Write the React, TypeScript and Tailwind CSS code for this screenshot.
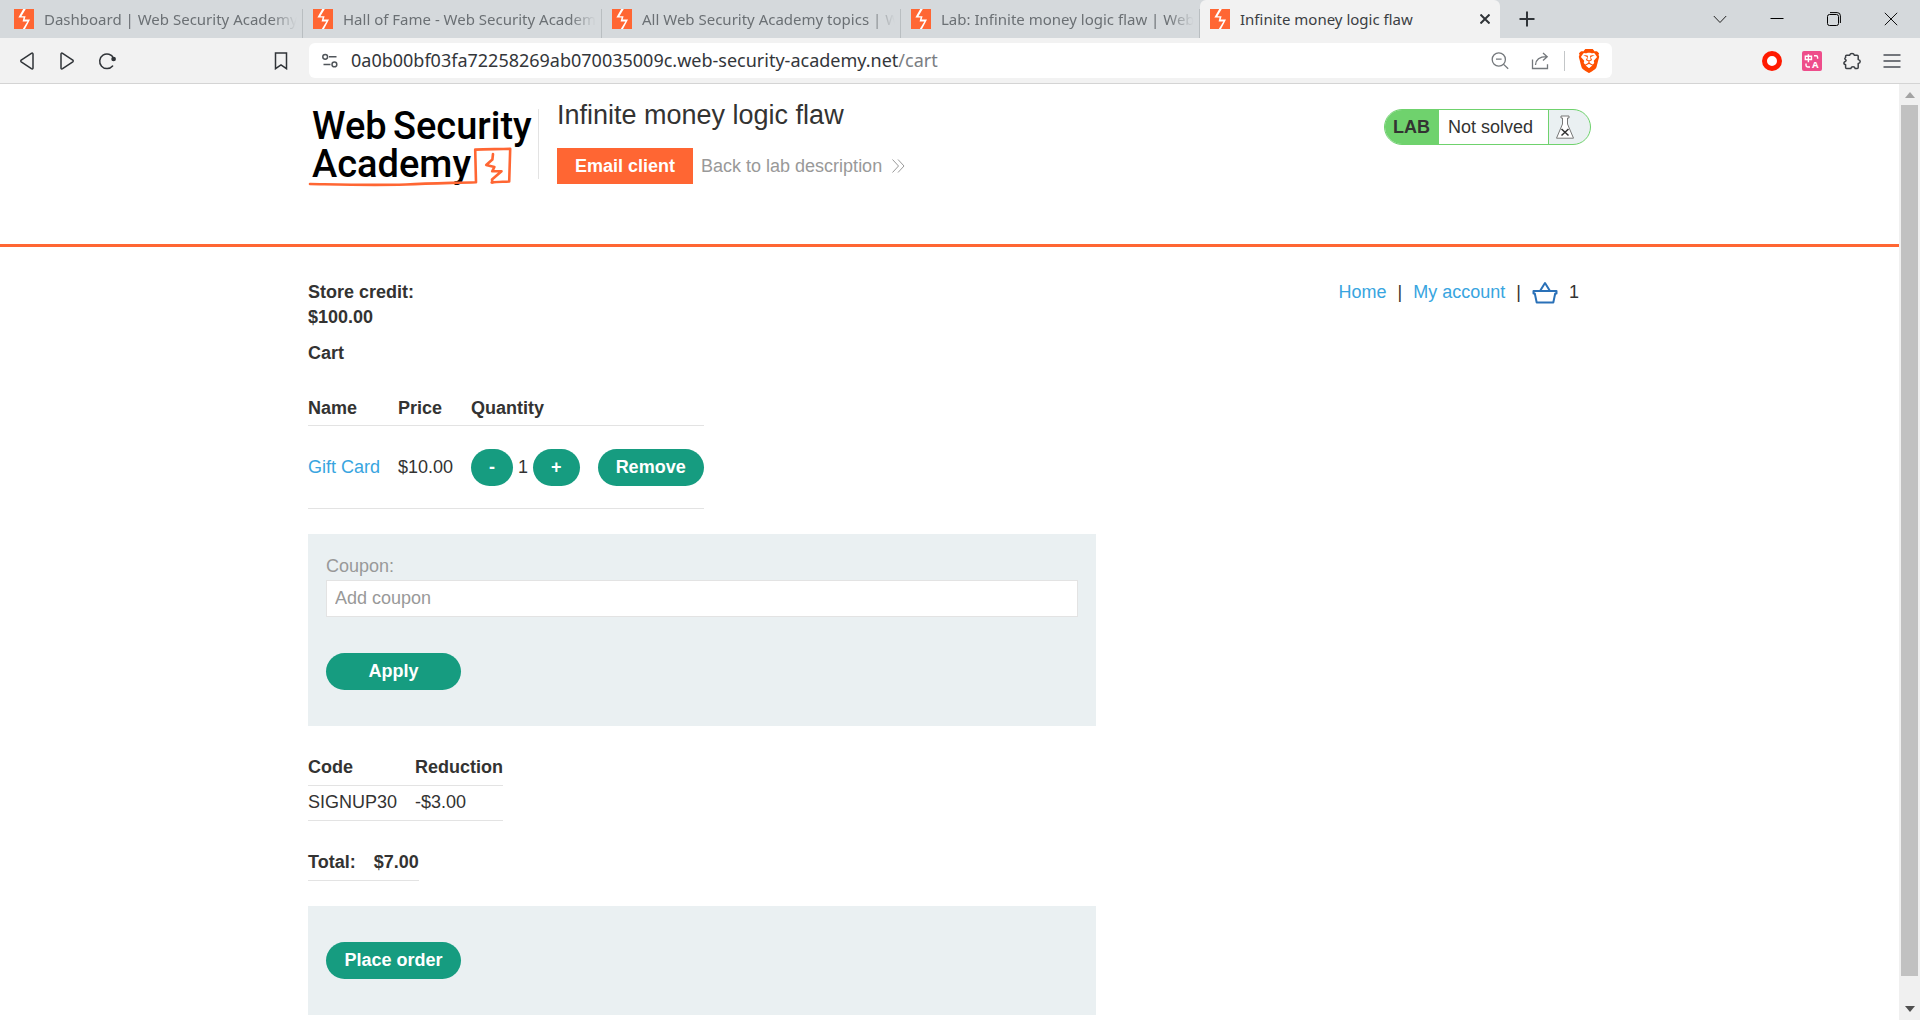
import type { ReactNode } from "react";
import { SiBrave } from "react-icons/si";

const tabs = [
    { title: "Dashboard | Web Security Academy", active: false },
    { title: "Hall of Fame - Web Security Academ", active: false },
    { title: "All Web Security Academy topics | W", active: false },
    { title: "Lab: Infinite money logic flaw | Web", active: false },
    { title: "Infinite money logic flaw", active: true },
];

const items = [{ name: "Gift Card", price: "$10.00", quantity: 1 }];

const coupons = [{ code: "SIGNUP30", reduction: "-$3.00" }];

function Favicon() {
    return (
        <svg viewBox="0 0 20 20" className="mr-[10px] size-5 shrink-0" aria-hidden="true">
            <rect width="20" height="20" fill="#ff6633" />
            <path d="M9.2 0 4.4 8.6h5.2l-1 3.8h4.8L8.8 20h2.2l5-9.4h-5.4l1-3.4H7.4L11.8 0z" fill="#fff" />
        </svg>
    );
}

function IconButton({ label, className, children }: { label: string; className: string; children: ReactNode }) {
    return (
        <button type="button" aria-label={label} className={`flex h-full shrink-0 items-center justify-center ${className}`}>
            {children}
        </button>
    );
}

function TabStrip() {
    return (
        <div className="flex h-[38px] shrink-0 bg-[#d5d9dc] pl-1">
            {tabs.map((tab) => (
                <div
                    key={tab.title}
                    className={
                        tab.active
                            ? "flex h-full w-[300px] items-center rounded-t-md bg-[#f2f2f2] px-[10px] text-[#3b3e43]"
                            : "flex h-full w-[299px] items-center pl-[10px] text-[#6b7074]"
                    }
                >
                    <Favicon />
                    <span
                        className={
                            tab.active
                                ? "min-w-0 flex-1 overflow-hidden whitespace-nowrap"
                                : "min-w-0 flex-1 overflow-hidden whitespace-nowrap [mask-image:linear-gradient(to_right,black_88%,transparent_98%)]"
                        }
                    >
                        {tab.title}
                    </span>
                    {tab.active ? (
                        <button type="button" aria-label="Close tab">
                            <svg viewBox="0 0 10 10" className="size-[10px]" stroke="#303438" strokeWidth="2">
                                <path d="m.5.5 9 9M9.5.5l-9 9" />
                            </svg>
                        </button>
                    ) : (
                        <span className="mt-[9px] h-[29px] w-px self-start bg-[#b9bec1]" />
                    )}
                </div>
            ))}
            <IconButton label="New tab" className="w-[53px]">
                <svg viewBox="0 0 16 16" className="size-4" stroke="#303438" strokeWidth="2">
                    <path d="M8 .5v15M.5 8h15" />
                </svg>
            </IconButton>
            <div className="ml-auto flex pr-px">
                <IconButton label="Search tabs" className="w-[57px]">
                    <svg viewBox="0 0 14 14" className="size-[14px]" fill="none" stroke="#222">
                        <path d="m.8 4 6.2 6.5L13.2 4" />
                    </svg>
                </IconButton>
                <IconButton label="Minimize" className="w-[57px]">
                    <svg viewBox="0 0 14 14" className="size-[14px]" stroke="#000">
                        <path d="M.5 6.5h13" />
                    </svg>
                </IconButton>
                <IconButton label="Restore" className="w-[57px]">
                    <svg viewBox="0 0 14 14" className="size-[14px]" fill="none" stroke="#000">
                        <rect x=".5" y="2.5" width="11" height="11" rx="2" />
                        <path d="M3 .6h7.2a3.2 3.2 0 0 1 3.2 3.2V11" />
                    </svg>
                </IconButton>
                <IconButton label="Close" className="w-[57px]">
                    <svg viewBox="0 0 14 14" className="size-[14px]" stroke="#111">
                        <path d="m.8.8 12.4 12.4M13.2.8.8 13.2" />
                    </svg>
                </IconButton>
            </div>
        </div>
    );
}

function Toolbar() {
    return (
        <div className="flex h-[46px] shrink-0 items-center border-b border-[#d4d4d4] bg-[#f2f2f2]">
            <div className="flex h-full w-[309px] shrink-0 items-center pr-[8px] pl-[7px]">
                <IconButton label="Back" className="w-10">
                    <svg viewBox="0 0 18 18" className="size-[18px]" fill="none" stroke="#303438" strokeWidth="1.5" strokeLinejoin="round">
                        <path d="M13.4 1.3 3.2 8.2a1 1 0 0 0 0 1.6l10.2 6.9c.8.5 1.6.1 1.6-.8V2.1c0-.9-.8-1.3-1.6-.8z" />
                    </svg>
                </IconButton>
                <IconButton label="Forward" className="w-10">
                    <svg viewBox="0 0 18 18" className="size-[18px]" fill="none" stroke="#303438" strokeWidth="1.5" strokeLinejoin="round">
                        <path d="m4.6 1.3 10.2 6.9a1 1 0 0 1 0 1.6L4.6 16.7c-.8.5-1.6.1-1.6-.8V2.1c0-.9.8-1.3 1.6-.8z" />
                    </svg>
                </IconButton>
                <IconButton label="Reload" className="w-10">
                    <svg viewBox="0 0 18 18" className="size-[18px]" fill="none" stroke="#303438" strokeWidth="1.5" strokeLinecap="round">
                        <path d="M15.6 6.2A7.3 7.3 0 1 0 14.6 14" />
                        <circle cx="15.6" cy="7" r="1.6" fill="#303438" />
                    </svg>
                </IconButton>
                <IconButton label="Bookmark this tab" className="ml-auto w-10">
                    <svg viewBox="0 0 14 18" className="h-[18px] w-[14px]" fill="none" stroke="#303438" strokeWidth="1.5">
                        <path d="M1.5 1h11v15.7L7 12.8l-5.5 3.9z" />
                    </svg>
                </IconButton>
            </div>
            <div className="flex h-[35px] min-w-0 flex-1 items-center rounded-md bg-white">
                <IconButton label="View site information" className="w-[42px]">
                    <svg viewBox="0 0 16 16" className="size-4" fill="none" stroke="#50555a" strokeWidth="1.5">
                        <circle cx="3.2" cy="3.8" r="2.4" />
                        <path d="M7 3.8h7.5M1.5 11.4h7" />
                        <circle cx="12.4" cy="11.4" r="2.4" />
                    </svg>
                </IconButton>
                <div className="relative h-full min-w-0 flex-1">
                    <input
                        aria-label="Address"
                        defaultValue="0a0b00bf03fa72258269ab070035009c.web-security-academy.net/cart"
                        className="h-full w-full text-lg text-transparent outline-none"
                    />
                    <div aria-hidden="true" className="pointer-events-none absolute inset-0 flex items-center pb-[2px] text-lg text-[#33363a]">
                        0a0b00bf03fa72258269ab070035009c.web-security-academy.net
                        <span className="text-[#7a7e83]">/cart</span>
                    </div>
                </div>
                <IconButton label="Zoom" className="w-10">
                    <svg viewBox="0 0 18 18" className="size-[18px]" fill="none" stroke="#74787c" strokeWidth="1.3">
                        <circle cx="7.8" cy="7.5" r="6.6" />
                        <path d="M5 7.2h5.6m2 5.2 4.6 4.4" />
                    </svg>
                </IconButton>
                <IconButton label="Share" className="w-10">
                    <svg viewBox="0 0 18 18" className="size-[18px]" fill="none" stroke="#74787c" strokeWidth="1.3">
                        <path d="M1.5 7.5v9h15v-4.2M4.5 13c.3-5 3.5-8.2 11-8.3M12 .9l4.2 3.8L12 8.5" />
                    </svg>
                </IconButton>
                <span className="ml-1 h-5 w-px bg-[#c3c6c8]" />
                <IconButton label="Brave Shields" className="w-[47px]">
                    <SiBrave className="size-6 text-[#ff5000]" />
                </IconButton>
            </div>
            <div className="flex h-full w-[308px] shrink-0 items-center justify-end pr-[8px]">
                <IconButton label="Recorder" className="w-10">
                    <span className="size-5 rounded-full border-[5px] border-[#ff1a00] bg-white" />
                </IconButton>
                <IconButton label="Translate" className="w-10">
                    <svg viewBox="0 0 20 20" className="size-5" fill="none" stroke="#fff" strokeWidth="1.4">
                        <rect width="20" height="20" rx="2" fill="#ee4d8b" stroke="none" />
                        <path d="M3.3 5.3h6.2v3.2H3.3zM6.4 3.3v8M12 4.8h2.2q1.4 0 1.4 1.5v1.5M4 12.5v1.8q0 1.7 1.7 1.7h2.3" />
                        <text x="10" y="17" fontSize="9.5" fontWeight="700" fill="#fff" stroke="none">
                            A
                        </text>
                    </svg>
                </IconButton>
                <IconButton label="Extensions" className="w-10">
                    <svg viewBox="0 0 18 18" className="size-[18px]" fill="none" stroke="#3b3f44" strokeWidth="1.5" strokeLinejoin="round">
                        <path d="M3.6 3.2h3a2.5 2.5 0 0 1 4.8 0h2.8q1 0 1 1v3.2q2 .4 2 2.1t-2 2.1v3.9q0 1-1 1h-2a2.3 2.3 0 0 0-4.4 0H3.6q-1 0-1-1v-2.7q-1.9-.6-1.700-1.900.2-1 1.700-1.700 1-.7 0-1.600Q1 6.600 2.600 5.500V4.200q0-1 1-1z" />
                    </svg>
                </IconButton>
                <IconButton label="Menu" className="w-10">
                    <svg viewBox="0 0 18 14" className="h-[14px] w-[18px]" stroke="#4a4e55" strokeWidth="1.5">
                        <path d="M.5 1h17M.5 7h17M.5 13h17" />
                    </svg>
                </IconButton>
            </div>
        </div>
    );
}

function AcademyLogo() {
    return (
        <svg viewBox="0 0 226 84" className="h-[84px] w-[226px]" role="img" aria-label="Web Security Academy">
            <g className="font-['Roboto',sans-serif]" fontSize="38" fontWeight="500" fill="#000">
                <text x="4" y="35">Web</text>
                <text x="85" y="35">Security</text>
                <text x="4" y="73">Academy</text>
            </g>
            <g fill="none" stroke="#ff6633" strokeWidth="2.6" strokeLinecap="round" strokeLinejoin="round">
                <path d="M2 80c40 .8 62 1.500 96 .5 24-1.200 46-1.500 70-2.300l-.8-32.600c12-.8 24-.2 35-.8l-1 32.700c-6 .4-12 .2-17.500 1" />
                <path d="m185 50-.6 5.5-6.2 5.5 8.2 2-2.2 4.300h9.300l-9.500 8.200.5 3" />
            </g>
        </svg>
    );
}

function LabStatus() {
    return (
        <div className="mt-[10px] flex h-9 overflow-hidden rounded-full border border-[#6fd26d] bg-[#eaf0f2] text-[#333332]">
            <span className="flex items-center bg-[#6fd26d] pr-[9px] pl-2 font-bold">LAB</span>
            <span className="flex items-center border-r border-[#6fd26d] bg-white pr-[15px] pl-[9px]">Not solved</span>
            <span className="flex w-[41px] items-center pl-[7px]">
                <svg viewBox="0 0 18 24" className="h-6 w-[18px]" fill="#fff" stroke="#777" strokeWidth="1">
                    <path d="M5 1h8v2h-1.500v6L17.500 23.200H.5L6.500 9V3H5z" />
                    <path d="m5.500 14 7 6.500m0-6.500-7 6.500" stroke="#333" strokeWidth="1.5" />
                </svg>
            </span>
        </div>
    );
}

function LabHeader() {
    return (
        <header className="h-[163px] border-b-[3px] border-[#ff6633]">
            <div className="mx-auto flex max-w-[1283px] items-start pt-[15px]">
                <a href="#academy" className="mt-[5px] w-[230px] shrink-0">
                    <AcademyLogo />
                </a>
                <div className="mt-[10px] mr-[18px] h-[70px] w-px bg-[#e3e3e3]" />
                <div className="flex-1">
                    <h1 className="text-[27px] leading-8">Infinite money logic flaw</h1>
                    <div className="mt-[17px] flex items-center gap-2">
                        <button type="button" className="h-9 bg-[#ff6633] px-[18px] font-bold text-white">
                            Email client
                        </button>
                        <a href="#lab" className="flex items-center gap-[10px] text-[#999]">
                            Back to lab description
                            <svg viewBox="0 0 13 14" className="h-[14px] w-[13px]" fill="none" stroke="#999">
                                <path d="m.5.5 6 6.500-6 6.500M6 .5l6 6.500-6 6.500" />
                            </svg>
                        </a>
                    </div>
                </div>
                <LabStatus />
            </div>
        </header>
    );
}

function StoreNav() {
    return (
        <nav className="flex items-center gap-[11px] pr-3">
            <a href="#home" className="text-[#38a5e0]">Home</a>
            <span>|</span>
            <a href="#account" className="text-[#38a5e0]">My account</a>
            <span>|</span>
            <a href="#cart" aria-label="Basket">
                <svg viewBox="0 0 26 23" className="h-[23px] w-[26px]" fill="none" stroke="#2a71b8" strokeWidth="2" strokeLinejoin="round">
                    <path d="M1.500 10h23v2.500h-1.300L21.300 21.500H4.700L2.800 12.500H1.500zM8 10l5-8 5 8" />
                </svg>
            </a>
            <span>1</span>
        </nav>
    );
}

function PillButton({ label, className = "" }: { label: string; className?: string }) {
    return (
        <button type="button" className={`h-[37px] rounded-full bg-[#169c80] px-[18px] font-bold text-white ${className}`}>
            {label}
        </button>
    );
}

function CartTable() {
    return (
        <table className="mt-[27px] border-separate border-spacing-0 text-left">
            <thead>
                <tr>
                    <th className="border-b border-[#e3e3e3] pt-[3px] pr-[18px] pb-1">Name</th>
                    <th className="border-b border-[#e3e3e3] pt-[3px] pr-[18px] pb-1">Price</th>
                    <th className="border-b border-[#e3e3e3] pt-[3px] pr-[18px] pb-1">Quantity</th>
                    <th className="border-b border-[#e3e3e3]"></th>
                </tr>
            </thead>
            <tbody>
                {items.map((item) => (
                    <tr key={item.name}>
                        <td className="border-b border-[#e3e3e3] pr-[18px]">
                            <a href="#product" className="text-[#38a5e0]">{item.name}</a>
                        </td>
                        <td className="border-b border-[#e3e3e3] pr-[18px]">{item.price}</td>
                        <td className="border-b border-[#e3e3e3] pt-[23px] pr-[18px] pb-[22px]">
                            <div className="flex items-center gap-[5px]">
                                <PillButton label="-" />
                                <span>{item.quantity}</span>
                                <PillButton label="+" />
                            </div>
                        </td>
                        <td className="border-b border-[#e3e3e3]">
                            <PillButton label="Remove" />
                        </td>
                    </tr>
                ))}
            </tbody>
        </table>
    );
}

function CouponForm() {
    return (
        <form className="mt-[25px] max-w-[788px] bg-[#eaf0f2] px-[18px] pt-5 pb-9">
            <label htmlFor="coupon" className="block text-[#999]">Coupon:</label>
            <input
                id="coupon"
                type="text"
                placeholder="Add coupon"
                className="mt-px block h-[37px] w-full border border-[#e3e3e3] bg-white px-2 placeholder:text-[#999]"
            />
            <PillButton label="Apply" className="mt-9 block min-w-[135px]" />
        </form>
    );
}

function CouponTable() {
    return (
        <table className="mt-[25px] border-separate border-spacing-0 text-left">
            <thead>
                <tr>
                    <th className="border-b border-[#e3e3e3] pt-1 pr-[18px] pb-[5px]">Code</th>
                    <th className="border-b border-[#e3e3e3] pt-1 pb-[5px]">Reduction</th>
                </tr>
            </thead>
            <tbody>
                {coupons.map((coupon) => (
                    <tr key={coupon.code}>
                        <td className="border-b border-[#e3e3e3] pt-1 pr-[18px] pb-[5px]">{coupon.code}</td>
                        <td className="border-b border-[#e3e3e3] pt-1 pb-[5px]">{coupon.reduction}</td>
                    </tr>
                ))}
            </tbody>
        </table>
    );
}

function TotalTable() {
    return (
        <table className="mt-[25px] border-separate border-spacing-0 text-left">
            <tbody>
                <tr>
                    <th className="border-b border-[#e3e3e3] pt-1 pr-[18px] pb-[5px]">Total:</th>
                    <th className="border-b border-[#e3e3e3] pt-1 pb-[5px]">$7.00</th>
                </tr>
            </tbody>
        </table>
    );
}

function Scrollbar() {
    return (
        <div aria-hidden="true" className="flex w-[21px] shrink-0 flex-col items-center bg-[#f0f0f0]">
            <div className="flex h-[21px] items-center">
                <svg viewBox="0 0 10 6" className="h-[6px] w-[10px]" fill="#a3a3a3">
                    <path d="M0 6 5 0l5 6z" />
                </svg>
            </div>
            <div className="w-[17px] flex-1 bg-[#c1c1c1]" />
            <div className="flex h-11 items-end pb-2">
                <svg viewBox="0 0 10 6" className="h-[6px] w-[10px]" fill="#505050">
                    <path d="M0 0h10L5 6z" />
                </svg>
            </div>
        </div>
    );
}

export default function App() {
    return (
        <div className="flex h-screen flex-col overflow-hidden bg-white font-['Noto_Sans',sans-serif] text-[15px]">
            <TabStrip />
            <Toolbar />
            <div className="flex min-h-0 flex-1">
                <div className="min-w-0 flex-1 overflow-hidden font-['Liberation_Sans',Arial,sans-serif] text-[18px] leading-[25px] text-[#333332]">
                    <LabHeader />
                    <main className="mx-auto max-w-[1283px] pt-[33px]">
                        <div className="flex items-start justify-between">
                            <p className="font-bold">
                                Store credit:
                                <br />
                                $100.00
                            </p>
                            <StoreNav />
                        </div>
                        <h2 className="mt-[11px] font-bold">Cart</h2>
                        <CartTable />
                        <CouponForm />
                        <CouponTable />
                        <TotalTable />
                        <form className="mt-[25px] max-w-[788px] bg-[#eaf0f2] px-[18px] py-9">
                            <PillButton label="Place order" className="block min-w-[135px]" />
                        </form>
                    </main>
                </div>
                <Scrollbar />
            </div>
        </div>
    );
}
